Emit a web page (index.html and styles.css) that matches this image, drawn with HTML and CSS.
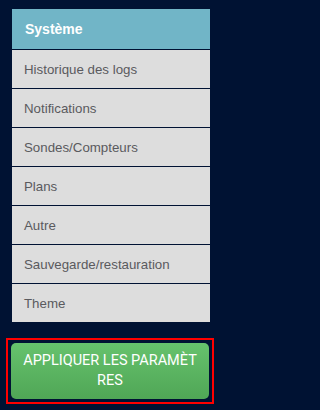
FILE: index.html
```html
<!DOCTYPE html>
<html lang="fr">
<head>
<meta charset="utf-8">
<link rel="stylesheet" href="styles.css">
</head>
<body>
<nav class="menu">
  <a class="item active">Système</a>
  <a class="item">Historique des logs</a>
  <a class="item">Notifications</a>
  <a class="item">Sondes/Compteurs</a>
  <a class="item">Plans</a>
  <a class="item">Autre</a>
  <a class="item">Sauvegarde/restauration</a>
  <a class="item last">Theme</a>
</nav>
<div class="apply-wrap">
  <button class="apply">APPLIQUER LES PARAMÈTRES</button>
</div>
</body>
</html>
```
FILE: styles.css
```css
html, body {
  margin: 0;
  padding: 0;
  background: #001233;
}
body {
  width: 218px;
  height: 410px;
  overflow: hidden;
  font-family: "Liberation Sans", Arial, sans-serif;
}
.menu {
  display: flex;
  flex-direction: column;
  margin: 9px 8px 0 12px;
}
.item {
  display: flex;
  align-items: center;
  height: 38px;
  padding-left: 12px;
  background: #dddddd;
  color: #5a5a5e;
  font-size: 13.3px;
  border-bottom: 1px solid #001233;
}
.item.active {
  height: 40px;
  background: #71b5c7;
  color: #ffffff;
  font-size: 14px;
  font-weight: bold;
  padding-left: 13px;
}
.item.last {
  border-bottom: none;
}
.apply-wrap {
  margin: 16px 4px 0 6px;
  border: 2px solid #ff0000;
  padding: 3px;
}
.apply {
  display: block;
  width: 100%;
  height: 56px;
  border: none;
  border-radius: 5px;
  background: linear-gradient(#66c26d, #50a656);
  color: #ffffff;
  font-family: Roboto, sans-serif;
  font-size: 14.5px;
  line-height: 20px;
  padding: 0 12px;
  word-break: break-all;
  text-align: center;
}
```
